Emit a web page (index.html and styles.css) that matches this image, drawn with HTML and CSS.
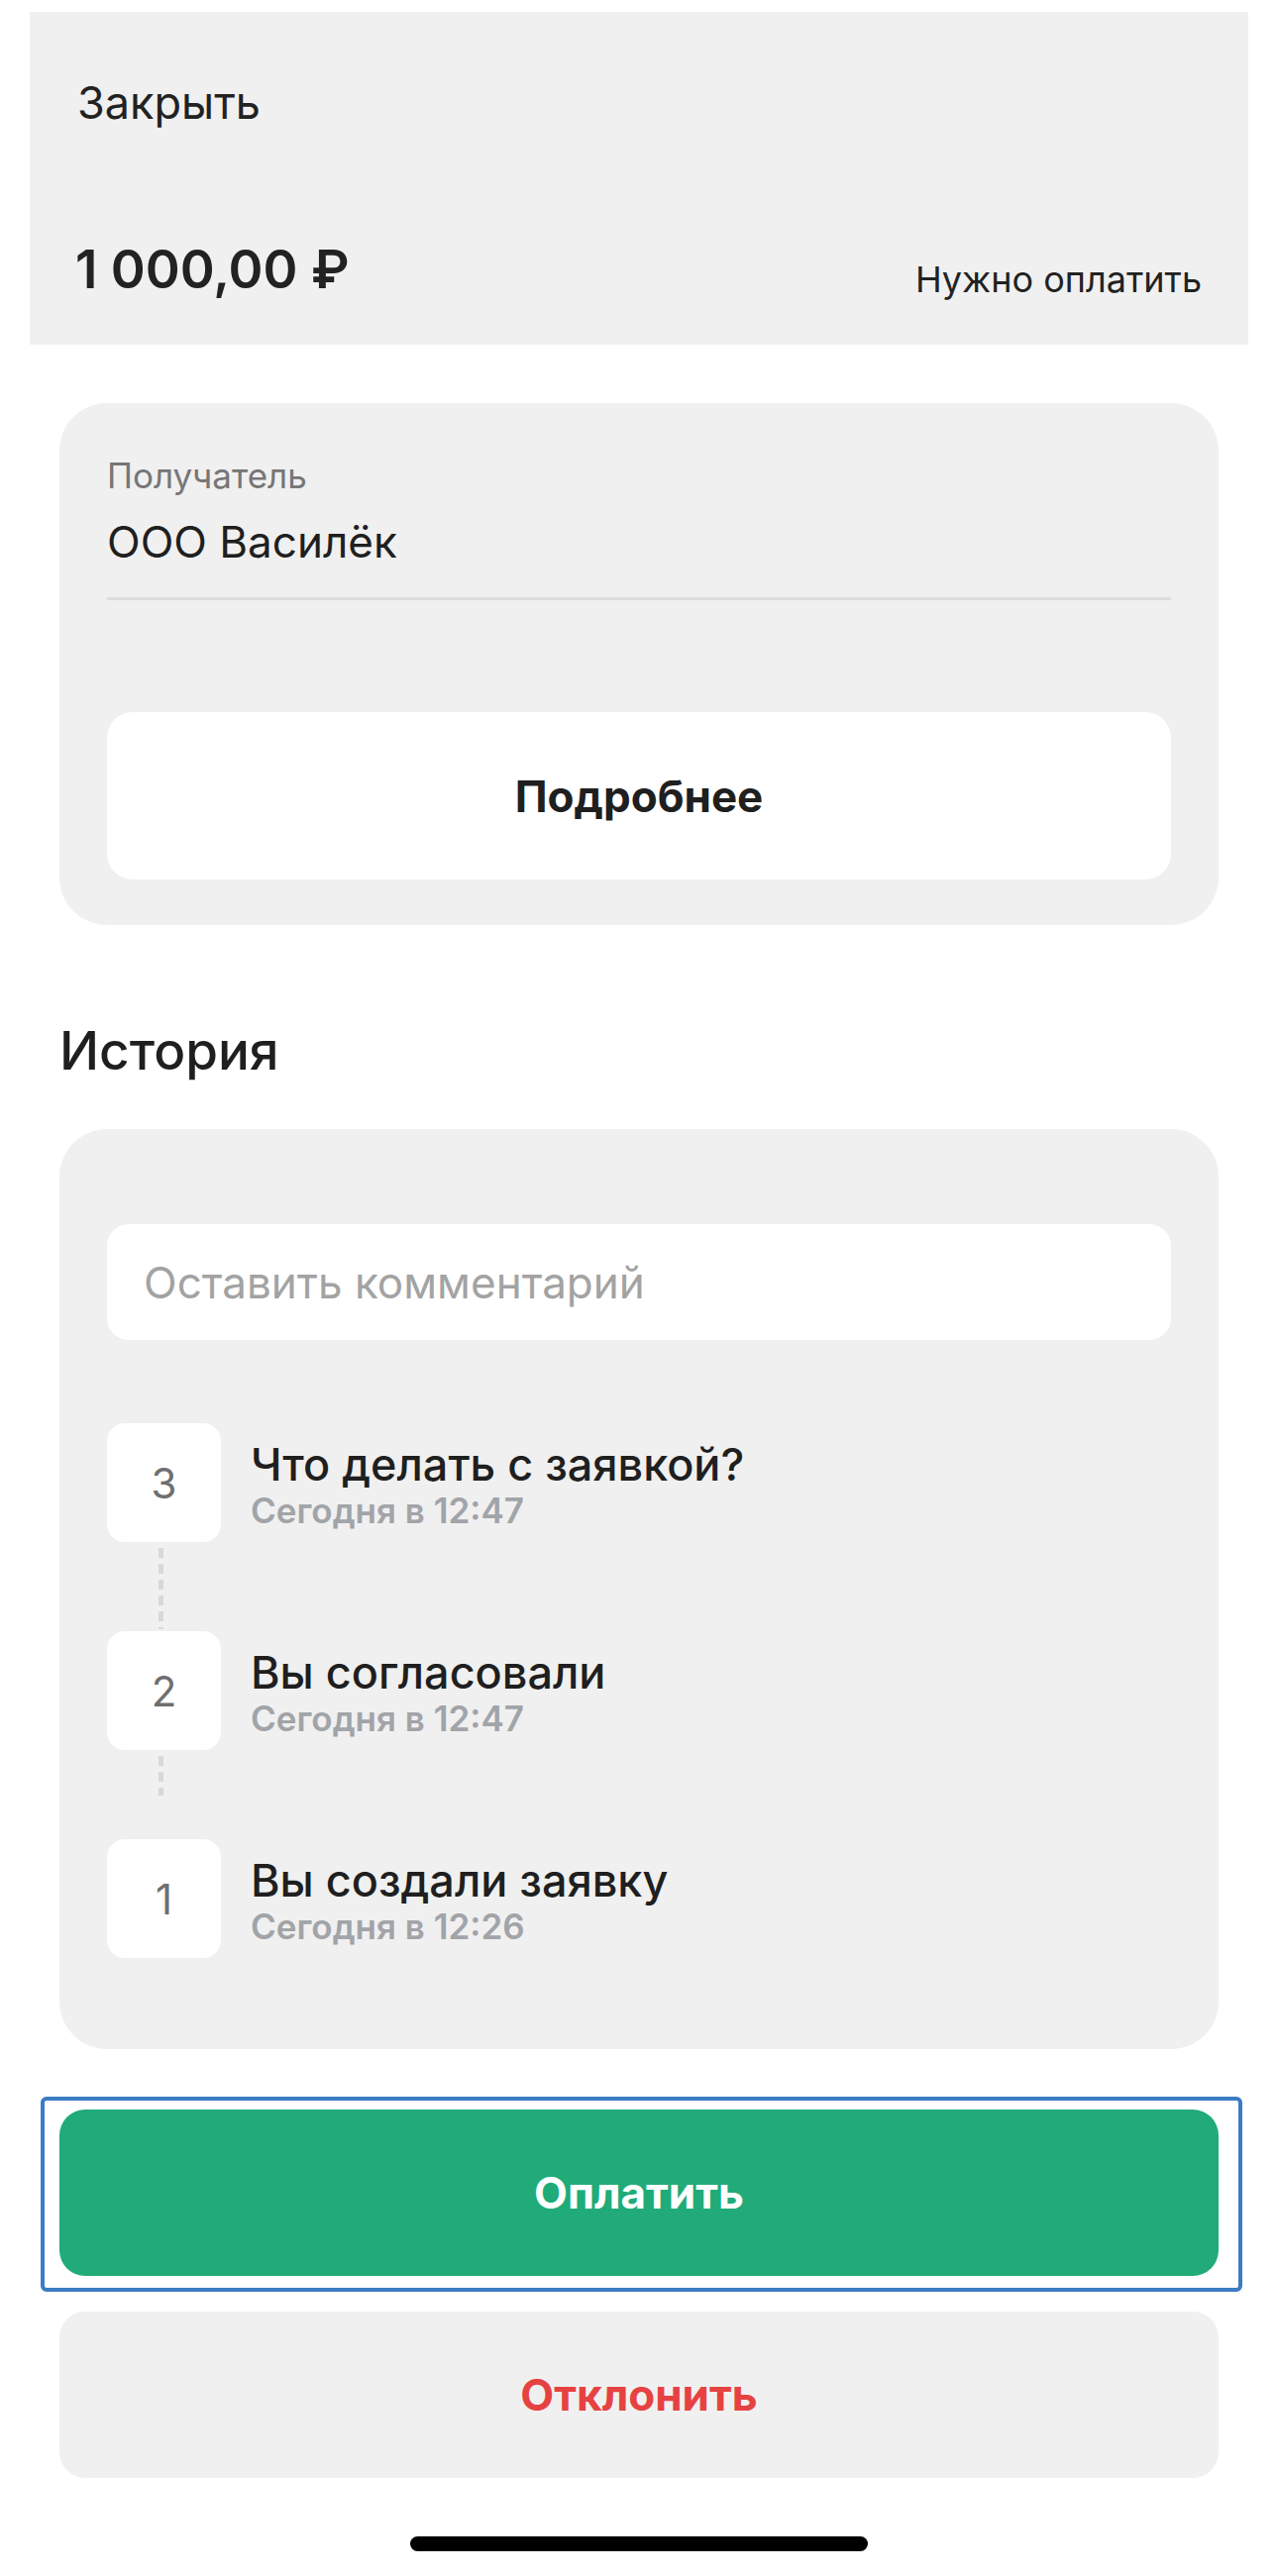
FILE: index.html
```html
<!DOCTYPE html>
<html lang="ru">
<head>
<meta charset="utf-8">
<title>Оплата заявки</title>
<link rel="stylesheet" href="styles.css">
</head>
<body>
<div class="screen">
  <header class="topbar">
    <div class="close">Закрыть</div>
    <div class="amount-row">
      <span class="amount">1 000,00 ₽</span>
      <span class="due">Нужно оплатить</span>
    </div>
  </header>

  <main class="content">
    <section class="card recipient">
      <div class="field-label">Получатель</div>
      <div class="field-value">ООО Василёк</div>
      <div class="divider"></div>
      <button class="btn btn-white">Подробнее</button>
    </section>

    <h2 class="section-title">История</h2>

    <section class="card history">
      <div class="comment">Оставить комментарий</div>
      <ol class="timeline">
        <li class="event">
          <div class="step">3</div>
          <div class="event-text">
            <div class="event-title">Что делать с заявкой?</div>
            <div class="event-date">Сегодня в 12:47</div>
          </div>
        </li>
        <li class="connector"><span class="dash dash-long"></span></li>
        <li class="event">
          <div class="step">2</div>
          <div class="event-text">
            <div class="event-title">Вы согласовали</div>
            <div class="event-date">Сегодня в 12:47</div>
          </div>
        </li>
        <li class="connector"><span class="dash dash-short"></span></li>
        <li class="event">
          <div class="step">1</div>
          <div class="event-text">
            <div class="event-title">Вы создали заявку</div>
            <div class="event-date">Сегодня в 12:26</div>
          </div>
        </li>
      </ol>
    </section>

    <div class="actions">
      <div class="focus-wrap">
        <button class="btn btn-green">Оплатить</button>
      </div>
      <button class="btn btn-gray">Отклонить</button>
    </div>
  </main>

  <div class="home-indicator"></div>
</div>
</body>
</html>
```

FILE: styles.css
```css
* {
  box-sizing: border-box;
}

html, body {
  margin: 0;
  padding: 0;
  background: #ffffff;
}

body {
  font-family: Inter, "Noto Sans", "Liberation Sans", sans-serif;
  color: #222222;
}

.screen {
  width: 1290px;
  min-height: 2601px;
  display: flex;
  flex-direction: column;
}

/* ---------- top bar ---------- */
.topbar {
  margin: 12px 30px 0;
  padding: 66px 47px 44px 48px;
  background: #f0f0f0;
}

.close {
  font-size: 45px;
  line-height: 52px;
  font-weight: 400;
  color: #222222;
}

.amount-row {
  margin-top: 110px;
  display: flex;
  justify-content: space-between;
  align-items: flex-end;
}

.amount {
  font-size: 53px;
  line-height: 64px;
  font-weight: 600;
  color: #222222;
  margin-left: -2px;
}

.due {
  font-size: 36px;
  line-height: 44px;
  font-weight: 400;
  color: #222222;
}

/* ---------- content ---------- */
.content {
  padding: 0 60px;
  display: flex;
  flex-direction: column;
}

.card {
  background: #f0f0f0;
  border-radius: 48px;
}

.recipient {
  margin-top: 59px;
  padding: 52px 48px 46px;
  display: flex;
  flex-direction: column;
}

.field-label {
  font-size: 35px;
  line-height: 42px;
  color: #767676;
}

.field-value {
  margin-top: 20px;
  font-size: 44px;
  line-height: 52px;
  color: #1f1f1f;
}

.divider {
  margin-top: 30px;
  height: 3px;
  background: #dcdcdc;
}

.btn {
  display: flex;
  align-items: center;
  justify-content: center;
  width: 100%;
  border: none;
  font-family: Inter, "Noto Sans", "Liberation Sans", sans-serif;
  font-size: 44px;
  font-weight: 700;
  padding: 0;
  cursor: pointer;
}

.btn-white {
  margin-top: 113px;
  height: 169px;
  background: #ffffff;
  color: #1f1f1f;
  border-radius: 26px;
}

.section-title {
  margin: 96px 0 48px;
  font-size: 53px;
  line-height: 62px;
  font-weight: 500;
  color: #1f1f1f;
}

.history {
  padding: 96px 48px 92px;
}

.comment {
  height: 117px;
  background: #ffffff;
  border-radius: 22px;
  padding-left: 37px;
  display: flex;
  align-items: center;
  font-size: 44px;
  color: #a3a3a3;
}

.timeline {
  list-style: none;
  margin: 84px 0 0;
  padding: 0;
}

.event {
  display: flex;
  align-items: flex-start;
}

.step {
  flex: 0 0 115px;
  height: 120px;
  background: #ffffff;
  border-radius: 18px;
  display: flex;
  align-items: center;
  justify-content: center;
  font-size: 42px;
  color: #6f6f6f;
}

.event-text {
  margin-left: 30px;
  padding-top: 16px;
}

.event-title {
  font-size: 45px;
  line-height: 52px;
  font-weight: 500;
  color: #1f1f1f;
}

.event-date {
  margin-top: -1px;
  font-size: 35px;
  line-height: 42px;
  font-weight: 600;
  color: #a1a4a8;
}

.connector {
  height: 90px;
  width: 115px;
  display: flex;
  justify-content: flex-start;
  padding: 6px 0 0 52px;
}

.dash {
  display: block;
  width: 5px;
  background: repeating-linear-gradient(to bottom, #d9d9d9 0 10px, transparent 10px 16px);
}

.dash-long {
  height: 82px;
}

.dash-short {
  height: 40px;
}

/* ---------- actions ---------- */
.actions {
  margin-top: 61px;
  display: flex;
  flex-direction: column;
  gap: 36px;
}

.focus-wrap {
  position: relative;
}

.focus-wrap::after {
  content: "";
  position: absolute;
  top: -13px;
  left: -19px;
  right: -24px;
  bottom: -16px;
  border: 4px solid #3b7cc3;
  border-radius: 6px;
  pointer-events: none;
}

.btn-green {
  height: 168px;
  background: #20ab78;
  color: #ffffff;
  border-radius: 26px;
}

.btn-gray {
  height: 168px;
  background: #f0f0f0;
  color: #e64242;
  border-radius: 26px;
}

.home-indicator {
  align-self: center;
  margin-top: 59px;
  width: 462px;
  height: 15px;
  border-radius: 8px;
  background: #000000;
}
```
